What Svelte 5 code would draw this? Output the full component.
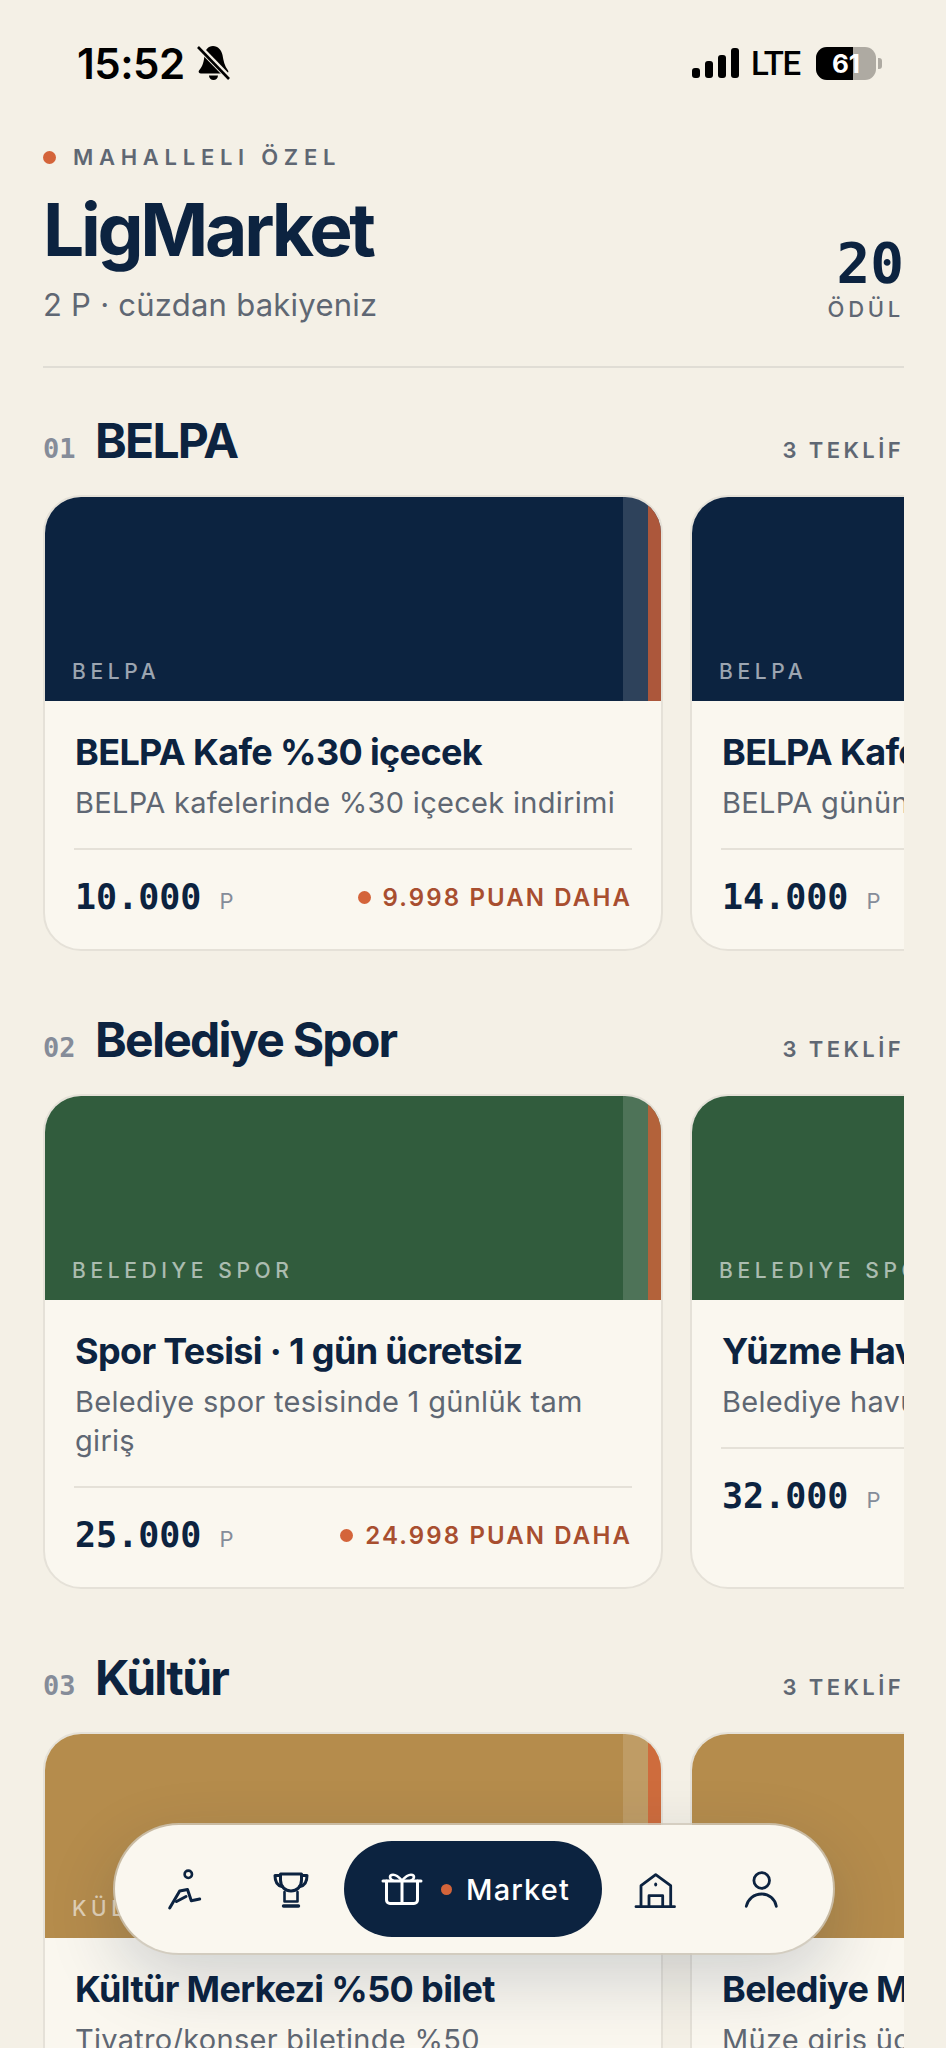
<script lang="ts">
	const navy = '#0c2340';
	const sections = [
		{
			no: '01', name: 'BELPA', color: navy,
			offers: [
				{ title: 'BELPA Kafe %30 içecek', desc: 'BELPA kafelerinde %30 içecek indirimi', price: '10.000', left: '9.998' },
				{ title: 'BELPA Kafe ücretsiz tatlı', desc: 'BELPA gününe özel ücretsiz tatlı', price: '14.000', left: '13.998' },
				{ title: 'BELPA Otel %20', desc: 'BELPA otellerinde konaklama indirimi', price: '40.000', left: '39.998' }
			]
		},
		{
			no: '02', name: 'Belediye Spor', color: '#315c3d',
			offers: [
				{ title: 'Spor Tesisi · 1 gün ücretsiz', desc: 'Belediye spor tesisinde 1 günlük tam giriş', price: '25.000', left: '24.998' },
				{ title: 'Yüzme Havuzu · 1 ay', desc: 'Belediye havuzunda aylık', price: '32.000', left: '31.998' },
				{ title: 'Fitness · 1 ay', desc: 'Belediye salonunda aylık üyelik', price: '45.000', left: '44.998' }
			]
		},
		{
			no: '03', name: 'Kültür', color: '#b58c4c',
			offers: [
				{ title: 'Kültür Merkezi %50 bilet', desc: 'Tiyatro/konser biletinde %50 indirimlerinden yararlanın', price: '8.000', left: '7.998' },
				{ title: 'Belediye Müzesi giriş', desc: 'Müze giriş ücreti bizden', price: '6.000', left: '5.998' },
				{ title: 'Kitap Fuarı kuponu', desc: 'Fuar alışverişinde geçerli kupon', price: '12.000', left: '11.998' }
			]
		}
	];
</script>

<div class="screen">
	<div class="status">
		<div class="status-left">
			<span class="time">15:52</span>
			<svg class="bell" width="36" height="38" viewBox="0 0 36 38">
				<path d="M18 2C23 2 26.500 6 27.500 11C28.500 17 29.500 22 33 26.500C34 28 33 29.500 31 29.500H6C4 29.500 3 28 4 26.500C8 22 9 17 9.500 11C10 6 13 2 18 2Z" fill="#000" />
				<path d="M14 31.500a4.500 4.500 0 0 0 9 0Z" fill="#000" />
				<path d="M2 1L35 35" stroke="#f4f0e6" stroke-width="6" />
				<path d="M3 3L34 35" stroke="#000" stroke-width="2.600" />
			</svg>
		</div>
		<div class="status-right">
			<div class="bars"><i class="b1"></i><i class="b2"></i><i class="b3"></i><i class="b4"></i></div>
			<span class="lte">LTE</span>
			<div class="battery"><div class="fill"></div><span>61</span></div>
			<div class="nub"></div>
		</div>
	</div>

	<header class="head">
		<div>
			<div class="eyebrow"><i class="dot"></i>MAHALLELI ÖZEL</div>
			<h1>LigMarket</h1>
			<p class="wallet">2 P · cüzdan bakiyeniz</p>
		</div>
		<div class="count">
			<strong>20</strong>
			<span>ÖDÜL</span>
		</div>
	</header>

	{#each sections as s}
		<section>
			<div class="sec-head">
				<span class="no">{s.no}</span>
				<h2>{s.name}</h2>
				<span class="tally">3 TEKLİF</span>
			</div>
			<div class="row">
				{#each s.offers as o}
					<article class="card">
						<div class="cover" style="background: {s.color}">
							<span>{s.name.toUpperCase()}</span>
							<i class="stripe-a"></i>
							<i class="stripe-b"></i>
						</div>
						<div class="body">
							<h3>{o.title}</h3>
							<p>{o.desc}</p>
							<div class="foot">
								<div class="price"><b>{o.price}</b><small>P</small></div>
								<div class="need"><i class="dot"></i>{o.left} PUAN DAHA</div>
							</div>
						</div>
					</article>
				{/each}
			</div>
		</section>
	{/each}

	<nav>
		<div class="item">
			<svg width="44" height="44" viewBox="0 0 44 44" fill="none" stroke="#0c2340" stroke-width="3" stroke-linecap="round" stroke-linejoin="round">
				<circle cx="25.300" cy="7.300" r="3.700" stroke-width="2.600" />
				<path d="M6.700 41L16.700 24L24.500 22.500L28.300 33.700L36.700 32" />
				<path d="M13.500 34.500L23 29.500" />
			</svg>
		</div>
		<div class="item">
			<svg width="44" height="44" viewBox="0 0 44 44" fill="none" stroke="#0c2340" stroke-width="3" stroke-linecap="round" stroke-linejoin="round">
				<path d="M11.500 7H32.500V13C32.500 20 27.500 24 22 24C16.500 24 11.500 20 11.500 13Z" />
				<path d="M11.500 8.500H6C6 14 8 18.500 13 19.500M32.500 8.500H38C38 14 36 18.500 31 19.500" />
				<path d="M15.500 25V34.500H28.500V25" stroke-width="2.600" />
				<path d="M14.500 39H29.500" stroke-width="3.400" />
			</svg>
		</div>
		<div class="item active">
			<svg width="44" height="44" viewBox="0 0 44 44" fill="none" stroke="#fff" stroke-width="3" stroke-linecap="round" stroke-linejoin="round">
				<path d="M3 14H41" />
				<path d="M6.500 14V33A3.500 3.500 0 0 0 10 36.500H34A3.500 3.500 0 0 0 37.500 33V14" />
				<path d="M22 14V36.500" />
				<path d="M22 13.500C18 9 14 7 11.500 8C9 9 10 13 13 13.500M22 13.500C26 9 30 7 32.500 8C35 9 34 13 31 13.500" stroke-width="2.600" />
			</svg>
			<i class="dot"></i>
			<span>Market</span>
		</div>
		<div class="item">
			<svg width="44" height="44" viewBox="0 0 44 44" fill="none" stroke="#0c2340" stroke-width="2.800" stroke-linecap="round" stroke-linejoin="round">
				<path d="M3 39.700H41.500" />
				<path d="M8 39.700V18.700L22.700 7.700L37.700 18.700V39.700" />
				<path d="M16 39.700V28.700H29.700V39.700" />
				<ellipse cx="22.700" cy="17.500" rx="1.500" ry="2.100" fill="#0c2340" stroke="none" />
			</svg>
		</div>
		<div class="item">
			<svg width="44" height="44" viewBox="0 0 44 44" fill="none" stroke="#0c2340" stroke-width="2.800" stroke-linecap="round" stroke-linejoin="round">
				<circle cx="22.700" cy="13.500" r="7.800" />
				<path d="M7.300 39.300C9 32 15 27 22.700 27C30 27 36 32 37.300 39.300" />
			</svg>
		</div>
	</nav>
</div>

<style>
	:global(body) {
		background: #f4f0e6;
		font-family: Inter, 'Noto Sans', sans-serif;
		color: #0c2340;
	}
	.screen {
		position: relative;
		height: 100vh;
		overflow: hidden;
	}
	i { display: block; }
	.dot {
		width: 13px;
		height: 13px;
		border-radius: 50%;
		background: #d4643a;
		flex-shrink: 0;
	}

	.status {
		display: flex;
		justify-content: space-between;
		align-items: center;
		height: 126px;
		padding: 0 64px 0 77px;
		color: #000;
	}
	.status-left, .status-right {
		display: flex;
		align-items: center;
	}
	.time {
		font-size: 42px;
		font-weight: 600;
		letter-spacing: -0.5px;
	}
	.bell { margin-left: 10px; }
	.bars {
		display: flex;
		align-items: flex-end;
		gap: 5px;
		height: 30px;
	}
	.bars i {
		width: 8px;
		border-radius: 3px;
		background: #000;
	}
	.b1 { height: 10px; }
	.b2 { height: 17px; }
	.b3 { height: 23px; }
	.b4 { height: 30px; }
	.lte {
		font-family: Roboto, sans-serif;
		font-size: 33px;
		font-weight: 500;
		letter-spacing: -1.2px;
		margin-left: 12px;
	}
	.battery {
		position: relative;
		width: 60px;
		height: 33px;
		margin-left: 16px;
		border-radius: 11px;
		background: #aeaaa2;
		overflow: hidden;
		display: flex;
		align-items: center;
		justify-content: center;
	}
	.fill {
		position: absolute;
		left: 0;
		top: 0;
		bottom: 0;
		width: 37px;
		background: #000;
	}
	.battery span {
		position: relative;
		color: #fff;
		font-size: 26px;
		font-weight: 700;
	}
	.nub {
		width: 4px;
		height: 11px;
		margin-left: 2px;
		border-radius: 0 3px 3px 0;
		background: #aeaaa2;
	}

	.head {
		display: flex;
		justify-content: space-between;
		align-items: flex-end;
		margin: 16px 42px 0 43px;
		padding-bottom: 41px;
		border-bottom: 2px solid #e0ddd5;
	}
	.eyebrow {
		display: flex;
		align-items: center;
		gap: 17px;
		font-size: 22px;
		font-weight: 600;
		letter-spacing: 0.26em;
		color: #5f6773;
		line-height: 30px;
	}
	h1 {
		margin: 16px 0 0;
		font-size: 73px;
		line-height: 84px;
		font-weight: 700;
		letter-spacing: -0.045em;
	}
	.wallet {
		margin: 13px 0 0;
		font-size: 31px;
		line-height: 40px;
		color: #5f6773;
		letter-spacing: 0.008em;
	}
	.count {
		display: flex;
		flex-direction: column;
		align-items: flex-end;
		margin-bottom: 2px;
	}
	.count strong {
		font-family: 'DejaVu Sans Mono', monospace;
		font-size: 56px;
		line-height: 65px;
		font-weight: 700;
	}
	.count span {
		font-size: 22px;
		line-height: 28px;
		font-weight: 500;
		letter-spacing: 0.17em;
		color: #5f6773;
	}

	section {
		margin: 0 42px 0 43px;
		padding-top: 45px;
		padding-bottom: 16px;
	}
	.sec-head {
		display: flex;
		align-items: baseline;
		height: 56px;
		margin-bottom: 26px;
	}
	.no {
		width: 52px;
		font-family: 'DejaVu Sans Mono', monospace;
		font-size: 27px;
		font-weight: 700;
		color: #858c99;
	}
	h2 {
		margin: 0;
		font-size: 48px;
		line-height: 56px;
		font-weight: 700;
		letter-spacing: -0.036em;
	}
	.tally {
		margin-left: auto;
		font-size: 22px;
		font-weight: 600;
		letter-spacing: 0.155em;
		line-height: 28px;
		color: #5f6773;
	}

	.row {
		display: flex;
		gap: 27px;
		overflow: hidden;
	}
	.card {
		flex: 0 0 620px;
		box-sizing: border-box;
		border: 2px solid #e5e1d8;
		border-radius: 38px;
		background: #faf7ef;
		overflow: hidden;
	}
	.cover {
		position: relative;
		height: 205px;
		margin-top: -1px;
	}
	.cover span {
		position: absolute;
		left: 27px;
		bottom: 17px;
		font-size: 21px;
		line-height: 24px;
		font-weight: 500;
		letter-spacing: 0.22em;
		color: rgba(255, 255, 255, 0.6);
	}
	.stripe-a, .stripe-b {
		position: absolute;
		top: 0;
		bottom: 0;
	}
	.stripe-a {
		right: 13px;
		width: 25px;
		background: rgba(255, 255, 255, 0.14);
	}
	.stripe-b {
		right: 0;
		width: 13px;
		background: #d4643a;
		opacity: 0.8;
	}
	.body { padding: 29px 29px 29px 30px; }
	h3 {
		margin: 0;
		font-size: 36px;
		line-height: 44px;
		font-weight: 700;
		letter-spacing: -0.018em;
	}
	.body p {
		margin: 9px 0 0;
		font-size: 29px;
		line-height: 39px;
		letter-spacing: 0.01em;
		color: #5f6773;
	}
	.foot {
		display: flex;
		justify-content: space-between;
		align-items: center;
		margin: 26px 0 0 -1px;
		padding-top: 24px;
		border-top: 2px solid #e5e1d8;
	}
	.price {
		display: flex;
		align-items: baseline;
		gap: 18px;
		margin-left: 1px;
	}
	.price b {
		font-family: 'DejaVu Sans Mono', monospace;
		font-size: 35px;
		line-height: 46px;
		font-weight: 700;
	}
	.price small {
		font-size: 22px;
		color: #858c99;
	}
	.need {
		display: flex;
		align-items: center;
		gap: 12px;
		font-size: 24px;
		font-weight: 600;
		letter-spacing: 0.088em;
		color: #a84e2f;
	}

	nav {
		position: absolute;
		left: 115px;
		top: 1825px;
		box-sizing: border-box;
		width: 718px;
		height: 128px;
		padding: 0 17px;
		display: flex;
		align-items: center;
		border-radius: 64px;
		background: #faf7ef;
		box-shadow: 0 0 0 2px rgba(208, 200, 185, 0.8), 0 24px 70px rgba(12, 35, 64, 0.18);
	}
	.item {
		flex: 0 0 106px;
		display: flex;
		justify-content: center;
		align-items: center;
	}
	.active {
		flex: 0 0 258px;
		justify-content: flex-start;
		box-sizing: border-box;
		height: 96px;
		padding-left: 36px;
		border-radius: 48px;
		background: #0c2340;
		color: #fff;
		font-size: 29px;
		font-weight: 500;
		letter-spacing: 0.04em;
	}
	.active .dot {
		width: 11px;
		height: 11px;
		margin: 0 14px 0 17px;
	}
</style>
